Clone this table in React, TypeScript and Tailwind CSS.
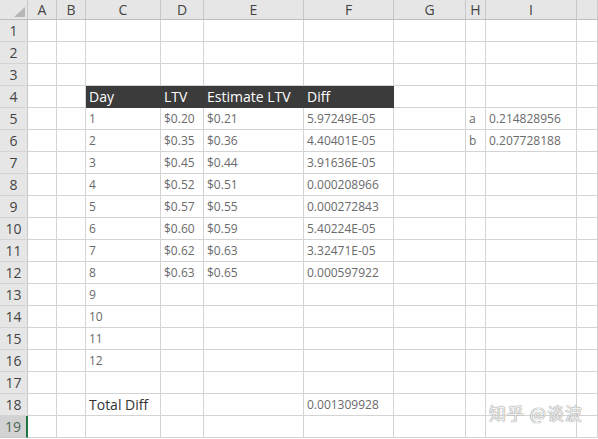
import React from 'react';

const COLS = [
  { key: 'A', w: 'w-[29px]' },
  { key: 'B', w: 'w-[29px]' },
  { key: 'C', w: 'w-[75px]' },
  { key: 'D', w: 'w-[43px]' },
  { key: 'E', w: 'w-[100px]' },
  { key: 'F', w: 'w-[90px]' },
  { key: 'G', w: 'w-[72px]' },
  { key: 'H', w: 'w-[20px]' },
  { key: 'I', w: 'w-[91px]' },
  { key: 'J', w: 'flex-1' },
];

const ltv = [
  ['1', '$0.20', '$0.21', '5.97249E-05'],
  ['2', '$0.35', '$0.36', '4.40401E-05'],
  ['3', '$0.45', '$0.44', '3.91636E-05'],
  ['4', '$0.52', '$0.51', '0.000208966'],
  ['5', '$0.57', '$0.55', '0.000272843'],
  ['6', '$0.60', '$0.59', '5.40224E-05'],
  ['7', '$0.62', '$0.63', '3.32471E-05'],
  ['8', '$0.63', '$0.65', '0.000597922'],
];

type Cells = Record<string, string>;

const rows: Cells[] = [];
for (let r = 1; r <= 19; r++) rows.push({});
rows[3] = { C: 'Day', D: 'LTV', E: 'Estimate LTV', F: 'Diff' };
ltv.forEach((v, i) => {
  rows[4 + i] = { C: v[0], D: v[1], E: v[2], F: v[3] };
});
rows[4].H = 'a';
rows[4].I = '0.214828956';
rows[5].H = 'b';
rows[5].I = '0.207728188';
['9', '10', '11', '12'].forEach((d, i) => {
  rows[12 + i] = { C: d };
});
rows[17] = { C: 'Total Diff', F: '0.001309928' };

const tableHead = ['C', 'D', 'E', 'F'];

export default function App() {
  return (
    <div
      className="relative w-[598px] h-[439px] overflow-hidden bg-white"
      style={{ fontFamily: '"Open Sans", "Noto Sans", sans-serif' }}
    >
      {/* column letters */}
      <div className="flex h-[20px] bg-[#e6e6e6] border-b border-[#bdbdbd]">
        <div className="w-[28px] border-r border-[#c8c8c8] relative">
          <svg className="absolute left-0 top-0" width="28" height="20">
            <polygon points="14,17 25,17 25,7" fill="#b6b6b6" />
          </svg>
        </div>
        {COLS.map((c) => (
          <div
            key={c.key}
            className={`${c.w} border-r border-[#c8c8c8] flex items-center justify-center text-[14px] text-[#444]`}
          >
            {c.key === 'J' ? '' : c.key}
          </div>
        ))}
      </div>

      {rows.map((cells, i) => {
        const n = i + 1;
        const selected = n === 19;
        return (
          <div key={n} className="flex h-[22px]">
            <div
              className={
                selected
                  ? 'w-[28px] bg-[#d2d2d2] border-r-2 border-r-[#217346] border-b border-b-[#c8c8c8] flex items-center justify-center text-[14px] text-[#4a6552]'
                  : 'w-[28px] bg-[#e6e6e6] border-r border-r-[#c8c8c8] border-b border-b-[#d4d4d4] flex items-center justify-center text-[14px] text-[#444]'
              }
            >
              {n}
            </div>
            {COLS.map((c) => {
              const dark = n === 4 && tableHead.includes(c.key);
              const total = n === 18 && c.key === 'C';
              const text = cells[c.key];
              return (
                <div
                  key={c.key}
                  className={
                    dark
                      ? `${c.w} bg-[#3b3b3b] border-r border-b border-[#3b3b3b] flex items-center pl-[3px] text-[14px] text-white whitespace-nowrap`
                      : `${c.w} border-r border-b border-[#d4d4d4] flex items-center pl-[3px] whitespace-nowrap ${total ? 'text-[14px] text-[#333]' : 'text-[12px] text-[#6a6a6a]'}`
                  }
                >
                  {text}
                </div>
              );
            })}
          </div>
        );
      })}

      {/* watermark */}
      <div
        className="absolute left-[489px] top-[400px] text-[17px] text-[#f2f2f2] tracking-[1px]"
        style={{
          fontFamily: '"Noto Sans CJK SC", sans-serif',
          textShadow: '0 0 1px #8a8a8a, 0 0 1px #8a8a8a',
        }}
      >
        知乎 @谈波
      </div>
    </div>
  );
}
